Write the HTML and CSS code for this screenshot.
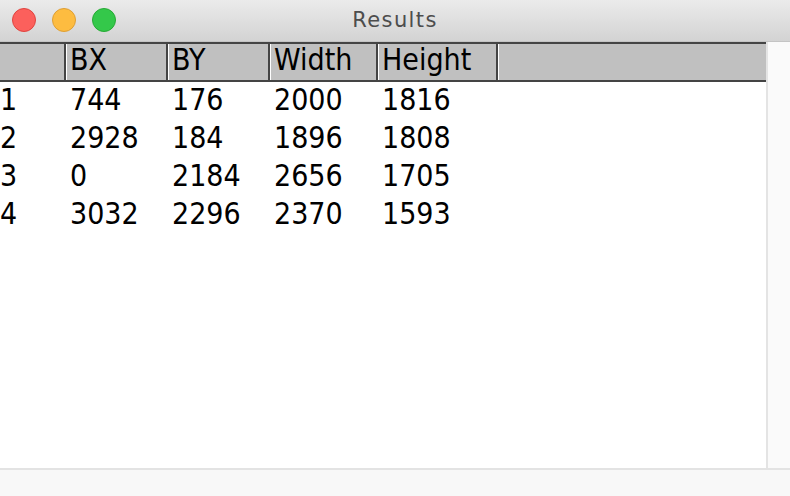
FILE: index.html
```html
<!DOCTYPE html>
<html lang="en">
<head>
    <meta charset="UTF-8">
    <title>Results</title>
    <link rel="stylesheet" href="styles.css">
</head>
<body>
    <div class="window">
        <div class="titlebar">
            <div class="lights">
                <span class="light red"></span>
                <span class="light yellow"></span>
                <span class="light green"></span>
            </div>
            <div class="title">Results</div>
        </div>

        <div class="content">
            <div class="table-pane">
                <div class="grid head">
                    <div class="cell first"></div>
                    <div class="cell">BX</div>
                    <div class="cell">BY</div>
                    <div class="cell">Width</div>
                    <div class="cell">Height</div>
                    <div class="cell filler"></div>
                </div>
                <div class="grid row">
                    <div class="cell first">1</div>
                    <div class="cell">744</div>
                    <div class="cell">176</div>
                    <div class="cell">2000</div>
                    <div class="cell">1816</div>
                    <div class="cell"></div>
                </div>
                <div class="grid row">
                    <div class="cell first">2</div>
                    <div class="cell">2928</div>
                    <div class="cell">184</div>
                    <div class="cell">1896</div>
                    <div class="cell">1808</div>
                    <div class="cell"></div>
                </div>
                <div class="grid row">
                    <div class="cell first">3</div>
                    <div class="cell">0</div>
                    <div class="cell">2184</div>
                    <div class="cell">2656</div>
                    <div class="cell">1705</div>
                    <div class="cell"></div>
                </div>
                <div class="grid row">
                    <div class="cell first">4</div>
                    <div class="cell">3032</div>
                    <div class="cell">2296</div>
                    <div class="cell">2370</div>
                    <div class="cell">1593</div>
                    <div class="cell"></div>
                </div>
            </div>
            <div class="scrollbar"></div>
        </div>

        <div class="statusbar"></div>
    </div>
</body>
</html>
```

FILE: styles.css
```css
* {
    box-sizing: border-box;
}
html, body {
    margin: 0;
    padding: 0;
    background: #fff;
}
.window {
    width: 790px;
    height: 496px;
    display: flex;
    flex-direction: column;
    overflow: hidden;
}

/* title bar */
.titlebar {
    height: 42px;
    flex: none;
    display: flex;
    align-items: center;
    position: relative;
    background: linear-gradient(#ebebeb, #d3d3d3);
    border-bottom: 1px solid #c4c4c4;
}
.lights {
    display: flex;
    gap: 16px;
    padding-left: 12px;
    margin-top: -1px;
}
.light {
    width: 24px;
    height: 24px;
    border-radius: 50%;
    border: 1px solid;
}
.red {
    background: #fc605c;
    border-color: #e0443f;
}
.yellow {
    background: #fdbc40;
    border-color: #de9f34;
}
.green {
    background: #34c84a;
    border-color: #27aa35;
}
.title {
    position: absolute;
    left: 0;
    right: 0;
    text-align: center;
    font-family: "DejaVu Sans", sans-serif;
    font-size: 21px;
    letter-spacing: 1.4px;
    color: #4d4d4d;
    margin-top: -1px;
}

/* table */
.content {
    flex: 1;
    display: flex;
    min-height: 0;
}
.table-pane {
    flex: 1;
    background: #fff;
}
.scrollbar {
    width: 24px;
    flex: none;
    background: #fafafa;
    border-left: 2px solid #e4e4e4;
}
.grid {
    display: grid;
    grid-template-columns: 66px 102px 102px 108px 120px 1fr;
    font-family: "DejaVu Sans Condensed", "DejaVu Sans", sans-serif;
    font-stretch: semi-condensed;
    font-size: 30px;
    color: #000;
}
.cell {
    padding-left: 3px;
    border-left: 1px solid transparent;
    border-right: 2px solid transparent;
    white-space: nowrap;
}
.cell.first {
    padding-left: 0;
    border-left: 0;
}
.head {
    background: #c0c0c0;
    border-top: 2px solid #444;
    border-bottom: 2px solid #444;
}
.head .cell {
    line-height: 31px;
    padding-bottom: 5px;
    border-left-color: #fff;
    border-right-color: #444;
}
.head .cell.filler {
    border-right: 0;
}
.row .cell {
    line-height: 35px;
    padding-bottom: 3px;
}

/* bottom strip */
.statusbar {
    height: 28px;
    flex: none;
    background: #f8f8f8;
    border-top: 2px solid #e3e3e3;
}
```
